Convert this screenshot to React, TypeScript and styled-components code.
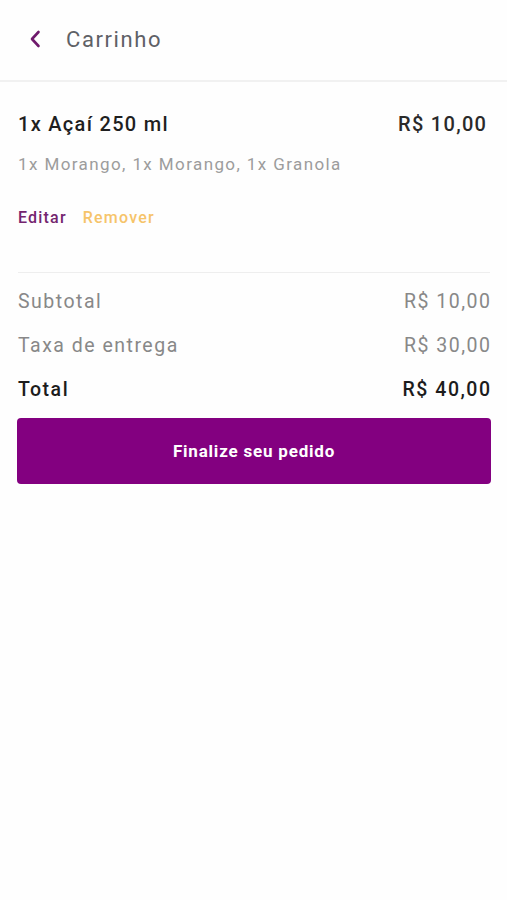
import React from 'react';
import styled, { createGlobalStyle } from 'styled-components';

const GlobalStyle = createGlobalStyle`
  html, body {
    margin: 0;
    padding: 0;
    background: #fefefe;
  }
  body {
    font-family: Roboto, "Noto Sans", Arial, sans-serif;
  }
  * {
    box-sizing: border-box;
  }
`;

const Page = styled.div`
  min-height: 900px;
  background: #fefefe;
`;

const Header = styled.header`
  height: 82px;
  display: flex;
  align-items: center;
  padding: 0 0 2px 26px;
  border-bottom: 2px solid #f1f1f1;
`;

const BackButton = styled.button`
  width: 18px;
  height: 24px;
  padding: 0;
  border: 0;
  background: none;
  display: flex;
  align-items: center;
  justify-content: center;
  cursor: pointer;
`;

const Title = styled.h1`
  margin: 0 0 0 22px;
  font-size: 22px;
  font-weight: 400;
  letter-spacing: 1.6px;
  color: #5e6166;
`;

const Item = styled.section`
  padding: 30px 21px 0 18px;
`;

const ItemRow = styled.div`
  display: flex;
  justify-content: space-between;
  align-items: baseline;
`;

const ItemName = styled.span`
  font-size: 20px;
  font-weight: 500;
  letter-spacing: 1.3px;
  color: #1f1f1f;
`;

const ItemPrice = styled.span`
  font-size: 20px;
  font-weight: 500;
  letter-spacing: 1.3px;
  margin-right: -1.3px;
  color: #2a2a2a;
`;

const Extras = styled.p`
  margin: 18px 0 0;
  font-size: 17px;
  letter-spacing: 1.4px;
  color: #9c9c9c;
`;

const Actions = styled.div`
  display: flex;
  gap: 16px;
  margin-top: 34px;
`;

const LinkButton = styled.button<{ $tone: 'edit' | 'remove' }>`
  padding: 0;
  border: 0;
  background: none;
  font-family: inherit;
  font-size: 16px;
  font-weight: 500;
  letter-spacing: 1.2px;
  color: ${(p) => (p.$tone === 'edit' ? '#74256f' : '#f6c46a')};
  cursor: pointer;
`;

const Divider = styled.hr`
  margin: 45px 17px 0 18px;
  border: 0;
  border-top: 1px solid #eeeeee;
`;

const Summary = styled.section`
  padding: 14px 17px 0 18px;
  display: flex;
  flex-direction: column;
  gap: 15px;
`;

const SummaryRow = styled.div<{ $strong?: boolean }>`
  display: flex;
  justify-content: space-between;
  font-size: 19.5px;
  line-height: 29px;
  letter-spacing: 1.5px;
  font-weight: ${(p) => (p.$strong ? 500 : 400)};
  color: ${(p) => (p.$strong ? '#1c1c1c' : '#888888')};

  span:last-child {
    margin-right: -1.5px;
  }
`;

const Checkout = styled.button`
  display: block;
  width: calc(100% - 33px);
  margin: 14px 16px 0 17px;
  height: 66px;
  border: 0;
  border-radius: 4px;
  background: #830080;
  color: #ffffff;
  font-family: inherit;
  font-size: 17px;
  font-weight: 700;
  letter-spacing: 0.8px;
  cursor: pointer;
`;

const ChevronLeft = () => (
  <svg width="12" height="18" viewBox="0 0 12 18" fill="none">
    <path
      d="M9.5 2 L3 9 L9.5 16"
      stroke="#6f1a6c"
      strokeWidth="2.6"
      strokeLinecap="round"
      strokeLinejoin="round"
    />
  </svg>
);

export default function App() {
  return (
    <Page>
      <GlobalStyle />
      <Header>
        <BackButton aria-label="Voltar">
          <ChevronLeft />
        </BackButton>
        <Title>Carrinho</Title>
      </Header>
      <Item>
        <ItemRow>
          <ItemName>1x Açaí 250 ml</ItemName>
          <ItemPrice>R$ 10,00</ItemPrice>
        </ItemRow>
        <Extras>1x Morango, 1x Morango, 1x Granola</Extras>
        <Actions>
          <LinkButton $tone="edit">Editar</LinkButton>
          <LinkButton $tone="remove">Remover</LinkButton>
        </Actions>
      </Item>
      <Divider />
      <Summary>
        <SummaryRow>
          <span>Subtotal</span>
          <span>R$ 10,00</span>
        </SummaryRow>
        <SummaryRow>
          <span>Taxa de entrega</span>
          <span>R$ 30,00</span>
        </SummaryRow>
        <SummaryRow $strong>
          <span>Total</span>
          <span>R$ 40,00</span>
        </SummaryRow>
      </Summary>
      <Checkout>Finalize seu pedido</Checkout>
    </Page>
  );
}
